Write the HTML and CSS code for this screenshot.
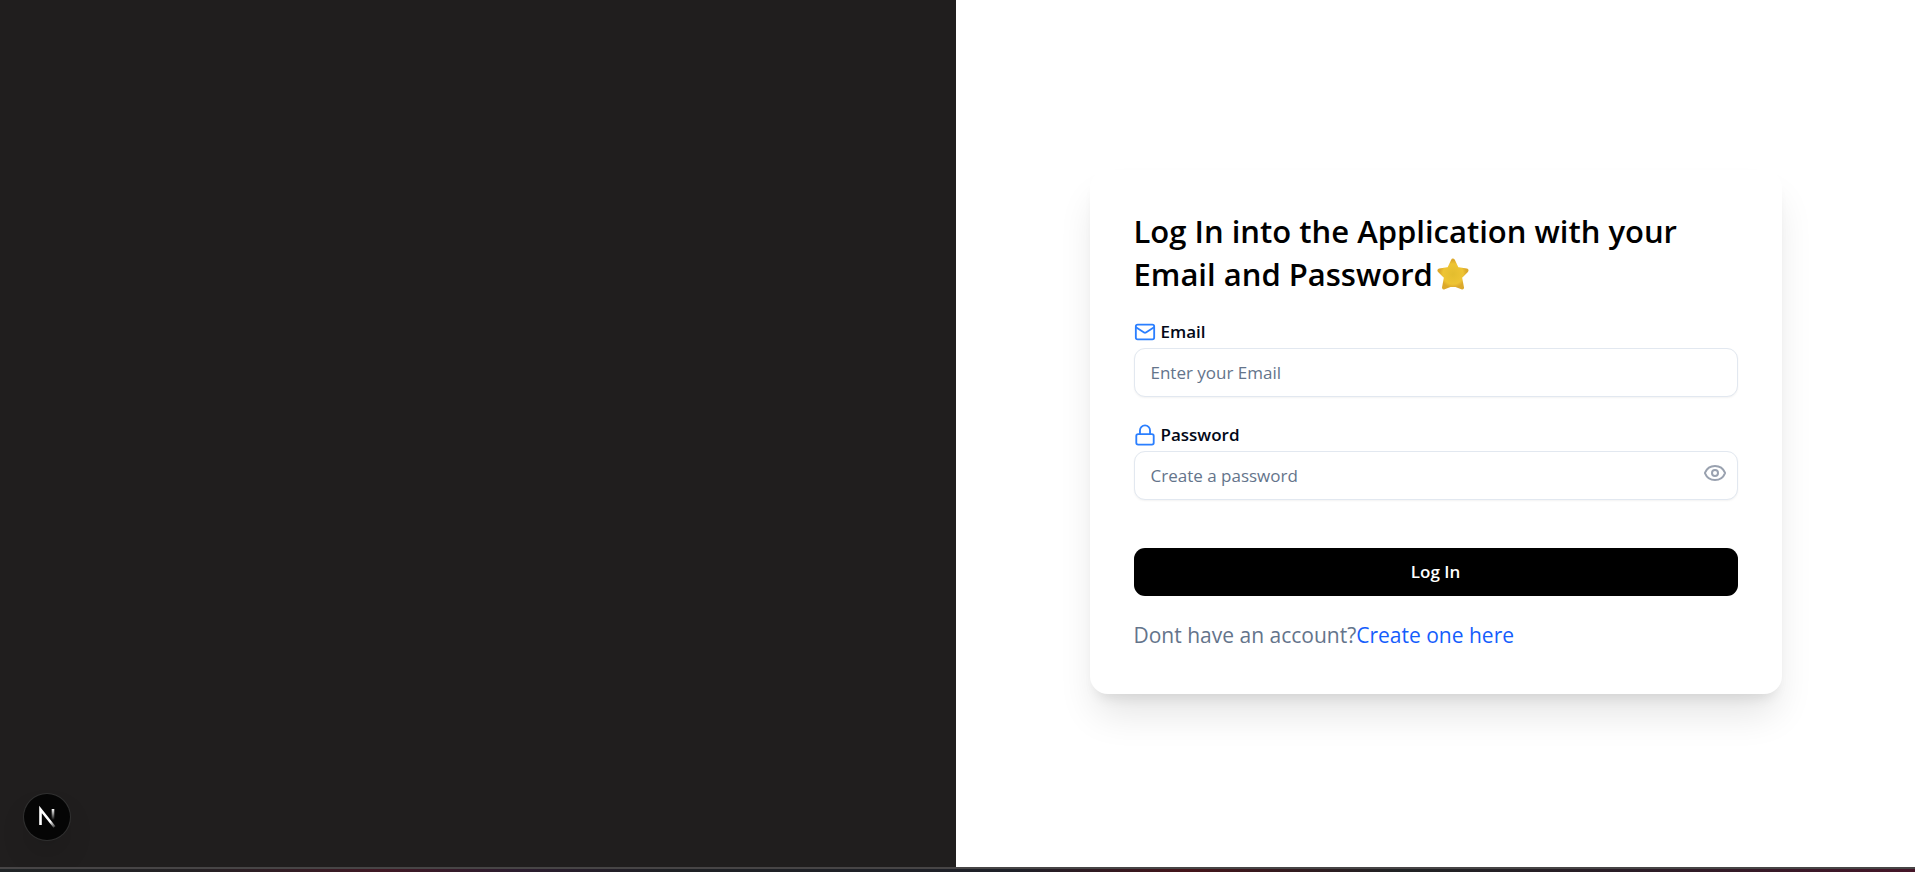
FILE: index.html
```html
<!DOCTYPE html>
<html lang="en">
<head>
<meta charset="utf-8">
<title>Log In</title>
<link rel="stylesheet" href="styles.css">
</head>
<body>
<div class="page">
  <aside class="side">
    <button class="dev-badge" type="button" aria-label="Open developer tools">
      <svg viewBox="1 1 46 46" width="46" height="46" fill="none">
        <defs>
          <linearGradient id="diag" x1="21" y1="20" x2="32" y2="34" gradientUnits="userSpaceOnUse"><stop offset=".6" stop-color="#fff"/><stop offset="1" stop-color="#fff" stop-opacity=".2"/></linearGradient>
          <linearGradient id="stem" x1="30" y1="16" x2="30" y2="27" gradientUnits="userSpaceOnUse"><stop stop-color="#fff"/><stop offset="1" stop-color="#fff" stop-opacity="0"/></linearGradient>
        </defs>
        <path d="M17.500 32V16.500L31.500 34" stroke="url(#diag)" stroke-width="2.600"/>
        <path d="M30 16V27" stroke="url(#stem)" stroke-width="2.600"/>
      </svg>
    </button>
  </aside>
  <main class="content">
    <form class="card">
      <h1 class="title">Log In into the Application with your Email and Password<svg class="star" viewBox="0 0 32 32" aria-hidden="true">
        <defs><radialGradient id="gold"><stop stop-color="#e3bd2e"/><stop offset=".75" stop-color="#eec434"/><stop offset="1" stop-color="#dca92c"/></radialGradient></defs>
        <path d="M16 2.500L20 11L29.500 12.500L23 19L25 29.500L16 26L7 29.500L9 19L2.500 12.500L12 11Z" fill="url(#gold)" stroke="url(#gold)" stroke-width="4" stroke-linejoin="round"/>
      </svg></h1>
      <div class="field">
        <label class="label" for="email">
          <svg class="icon" viewBox="0 0 24 24"><rect x="2" y="4" width="20" height="16" rx="2"/><path d="M2.500 7l8.500 5.500a2 2 0 0 0 2 0L21.500 7"/></svg>Email</label>
        <input class="input" id="email" type="email" placeholder="Enter your Email">
      </div>
      <div class="field">
        <label class="label" for="password">
          <svg class="icon" viewBox="0 0 24 24"><rect x="2.500" y="11" width="19" height="11.500" rx="2"/><path d="M6.500 11V7a5.500 5.500 0 0 1 11 0v4"/></svg>Password</label>
        <div class="input-wrap">
          <input class="input" id="password" type="password" placeholder="Create a password">
          <button class="eye" type="button" aria-label="Show password"><svg viewBox="0 0 24 24" width="24" height="24"><path d="M2.060 12.350a1 1 0 0 1 0-.700 10.750 10.750 0 0 1 19.880 0 1 1 0 0 1 0 .700 10.750 10.750 0 0 1-19.880 0"/><circle cx="12" cy="12" r="3"/></svg></button>
        </div>
      </div>
      <button class="submit" type="submit">Log In</button>
      <p class="signup">Dont have an account?<a href="#">Create one here</a></p>
    </form>
  </main>
</div>
<div class="edge"></div>
</body>
</html>
```
FILE: styles.css
```css
* { box-sizing: border-box; }
body {
  margin: 0;
  min-height: 100vh;
  display: flex;
  flex-direction: column;
  font-family: "Segoe UI", "Open Sans", sans-serif;
  background: #fff;
  color: #020817;
}
.page { flex: 1; display: grid; grid-template-columns: 956fr 959fr; }
.side {
  background: #201e1e;
  display: flex;
  align-items: flex-end;
  padding: 27px 24px;
}
.dev-badge {
  width: 46px;
  height: 46px;
  padding: 0;
  border: 0;
  border-radius: 50%;
  background: #050505;
  box-shadow: 0 0 0 1px #303030, 0 16px 32px -8px rgba(0, 0, 0, .24);
}
.dev-badge svg { display: block; }
.content { display: flex; align-items: center; justify-content: center; padding-bottom: 4px; }
.card {
  width: 73%;
  max-width: 692px;
  padding: 40px 44px 42px;
  border-radius: 18px;
  background: #fff;
  box-shadow: 0 25px 38px -6px rgba(0, 0, 0, .11), 0 10px 13px -7px rgba(0, 0, 0, .1);
}
.title { margin: 0 0 20px; font-size: 31px; line-height: 43px; font-weight: 600; color: #000; }
.star { width: 32px; height: 32px; margin-left: 4px; vertical-align: -4px; }
.field { margin-bottom: 22px; }
.label { display: flex; align-items: center; gap: 5px; height: 32px; font-size: 17px; font-weight: 600; }
.icon { width: 22px; height: 22px; fill: none; stroke: #2b7fff; stroke-width: 2; stroke-linecap: round; stroke-linejoin: round; }
.input-wrap { display: flex; position: relative; }
.input {
  display: block;
  width: 100%;
  height: 49px;
  padding: 0 16px;
  border: 1px solid #e2e8f0;
  border-radius: 11px;
  background: #fff;
  box-shadow: 0 1px 2px rgba(0, 0, 0, .05);
  font: 17px "Segoe UI", "Open Sans", sans-serif;
}
.input::placeholder { color: #64748b; opacity: 1; }
.eye { position: absolute; right: 11px; top: 10px; padding: 0; border: 0; background: none; }
.eye svg { display: block; fill: none; stroke: #99a1af; stroke-width: 2; stroke-linecap: round; stroke-linejoin: round; }
.submit {
  display: block;
  width: 100%;
  height: 48px;
  margin-top: 48px;
  border: 0;
  border-radius: 11px;
  background: #000;
  color: #fff;
  font: 600 17px "Segoe UI", "Open Sans", sans-serif;
}
.signup { margin: 22px 0 0; font-size: 21px; line-height: 34px; color: #64748b; }
.signup a { color: #155dfc; text-decoration: none; }
.edge {
  height: 5px;
  border-top: 2px solid #474546;
  background: linear-gradient(90deg, #202426 0, #242124 10%, #401824 20%, #2b1c2e 27%, #1e2024 35%, #1e2028 53%, #45141a 62%, #202224 73%, #2a1d26 85%, #451528 100%);
}
```
